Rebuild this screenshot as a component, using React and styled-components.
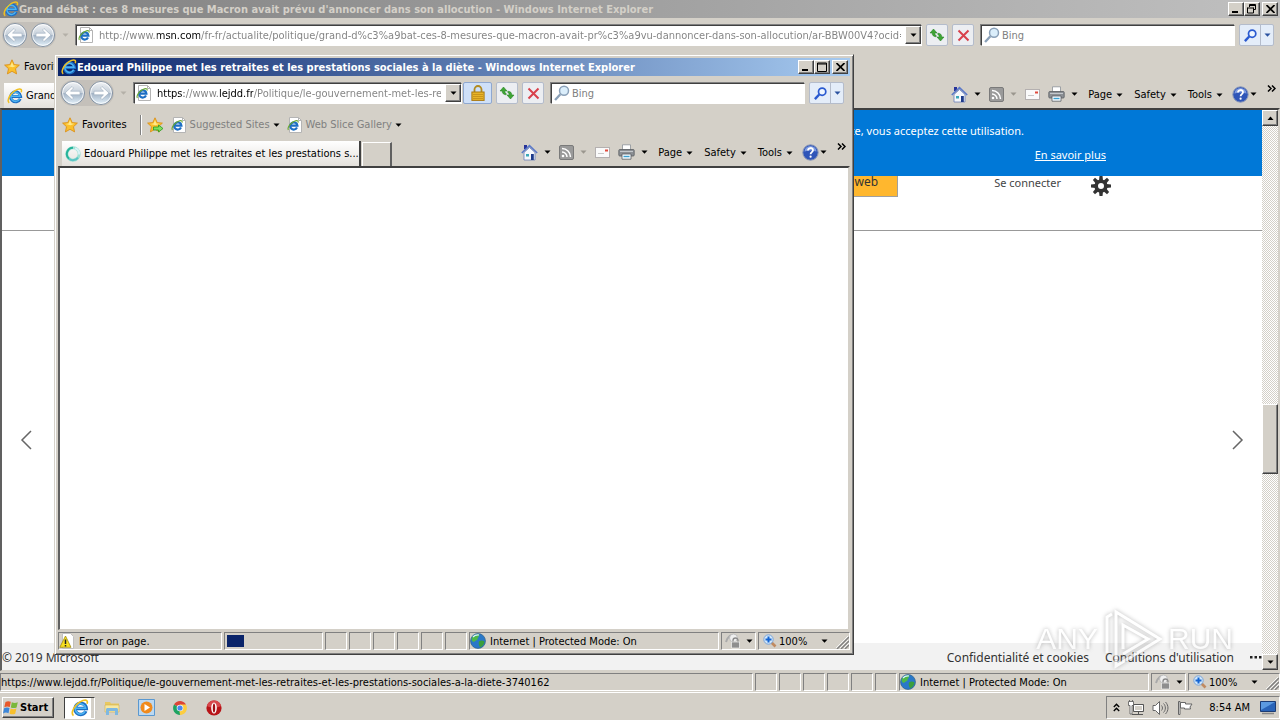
import React from 'react';
import styled, { createGlobalStyle, css } from 'styled-components';

const mainWindow = {
  title:
    "Grand débat : ces 8 mesures que Macron avait prévu d'annoncer dans son allocution - Windows Internet Explorer",
  url: 'http://www.msn.com/fr-fr/actualite/politique/grand-d%c3%a9bat-ces-8-mesures-que-macron-avait-pr%c3%a9vu-dannoncer-dans-son-allocution/ar-BBW00V4?ocid=ientp',
  urlStops: '#808080 58px, #000 58px 101px, #808080 101px',
  tab: 'Grand débat : ces 8 mesures que Macron avait…',
};

const popupWindow = {
  title:
    'Edouard Philippe met les retraites et les prestations sociales à la diète - Windows Internet Explorer',
  url: 'https://www.lejdd.fr/Politique/le-gouvernement-met-les-retraites-et-les-prestations-sociales-a-la-diete-3740162',
  urlStops: '#000 27px, #808080 27px 62px, #000 62px 96px, #808080 96px',
  tab: 'Edouard Philippe met les retraites et les prestations s...',
};

const IeLogo = ({ size = 16 }) => (
  <svg width={size} height={size} viewBox="0 0 16 16" fill="none">
    <path
      d="M13.2 10.8A5 5 0 1 1 13.6 8.4H4.4"
      stroke="#1d6fc4"
      strokeWidth="3"
    />
    <path
      d="M12.6 10.8A4.6 4.6 0 1 1 13 8.2H4.4"
      stroke="#4db4f2"
      strokeWidth="1.4"
    />
    <path
      d="M2.2 14.8C-.6 12.6 3 4.4 10.6 1.4c3.2-1.2 4.6.2 3.6 2.8"
      stroke="#f0c020"
      strokeWidth="1.5"
    />
  </svg>
);

const IePage = () => (
  <svg width="16" height="16" viewBox="0 0 16 16" fill="none">
    <path d="M2.5.5h9l3 3v12h-12z" fill="#fff" stroke="#b4b4b4" />
    <path d="M11.5.5v3h3" stroke="#b4b4b4" />
    <path
      d="M10 10.6A3.6 3.6 0 1 1 10.4 8.6H3.6"
      stroke="#1d6fc4"
      strokeWidth="2.2"
    />
    <path
      d="M1.4 13C0 11 3 5.6 8.6 3.8c2-.6 2.8.2 2.4 1.8"
      stroke="#6aa830"
      strokeWidth="1.1"
    />
  </svg>
);

const NavArrow = ({ flip }) => (
  <svg width="26" height="26" viewBox="0 0 26 26" fill="none">
    <defs>
      <linearGradient id="orb" x1="0" y1="0" x2="0" y2="1">
        <stop offset="0" stopColor="#f0f2f5" />
        <stop offset=".48" stopColor="#c6d0da" />
        <stop offset=".52" stopColor="#a4b4c6" />
        <stop offset="1" stopColor="#e4f2fb" />
      </linearGradient>
    </defs>
    <circle cx="13" cy="13" r="11.5" fill="url(#orb)" stroke="#8492a2" />
    <circle cx="13" cy="13" r="10.4" stroke="#fff" strokeOpacity=".8" />
    <path
      transform={flip ? 'translate(26 0) scale(-1 1)' : undefined}
      d="M5 13l7-6.500 1.500 1.500-3 3.200H20v3.600h-9.500l3 3.200-1.500 1.500z"
      fill="#fff"
      stroke="#9aabbc"
      strokeWidth=".6"
    />
  </svg>
);

const Star = ({ add }) => (
  <svg width="17" height="16" viewBox="0 0 17 16">
    <path
      d="M8 .8l2.2 4.8 5.2.5-3.9 3.6 1.1 5.2L8 12.3l-4.6 2.6 1.1-5.2L.6 6.1l5.2-.5z"
      fill="#fbc02c"
      stroke="#d98a10"
      strokeWidth=".8"
    />
    <path d="M8 3l1.4 3.5 3.2.3-4 1.4-5-1.3 3-.4z" fill="#ffe98a" />
    {add && (
      <path
        d="M6.5 10h5V8l4.500 3.500-4.500 3.500v-2h-5z"
        fill="#7fe060"
        stroke="#2a9a20"
        strokeWidth=".8"
      />
    )}
  </svg>
);

const Magnifier = ({ color = '#8aa0b8', glass = '#dbeefb', size = 16, weight = 1.4 }) => (
  <svg width={size} height={size} viewBox="0 0 15 15" fill="none">
    <path d="M1 14l5-5.400" stroke={color} strokeWidth={weight + 0.8} />
    <circle cx="9.400" cy="5.400" r="4.200" fill={glass} stroke={color} strokeWidth={weight} />
  </svg>
);

const Padlock = () => (
  <svg width="14" height="16" viewBox="0 0 14 16" fill="none">
    <path d="M3.5 8V4.5a3.5 3.5 0 0 1 7 0V8" stroke="#b08a20" strokeWidth="1.8" />
    <rect x=".9" y="7" width="12.2" height="8.4" fill="#e8b428" stroke="#a87812" />
    <path d="M2 9.5h10M2 11.5h10M2 13.5h10" stroke="#c08c18" strokeWidth=".8" />
  </svg>
);

const Refresh = () => (
  <svg width="16" height="14" viewBox="0 0 16 14" fill="#3fa535" stroke="#1d7a1a" strokeWidth=".5">
    <path d="M4.500 1L8 5H5.800c0 1.500.4 2 1.400 2.500v1.300C4.600 8.700 3.200 7.500 3.200 5H1z" />
    <path d="M11.500 13L8 9h2.200c0-1.500-.4-2-1.400-2.500V5.200c2.600.1 4 1.300 4 3.800H15z" />
  </svg>
);

const Cross = () => (
  <svg width="13" height="13" viewBox="0 0 13 13" fill="none">
    <path d="M1.500 1.500l10 10M11.500 1.500l-10 10" stroke="#d8414c" strokeWidth="2" />
  </svg>
);

const Home = () => (
  <svg width="17" height="17" viewBox="0 0 17 17" fill="none">
    <path d="M3 1h3v4H3z" fill="#27339a" />
    <path d="M3 8.500L8.500 3.500 14 8.500V16H3z" fill="#f6f8fc" stroke="#6a7fb8" strokeWidth=".8" />
    <path d="M.8 9l7.700-7.400L16.200 9" stroke="#5a78c8" strokeWidth="1.600" />
    <path d="M5 10h3v2.500H5z" fill="#3ba8b8" />
    <path d="M10 10h2.800v6H10z" fill="#1d3a8a" />
  </svg>
);

const Feed = () => (
  <svg width="15" height="15" viewBox="0 0 15 15" fill="none">
    <rect x=".5" y=".5" width="14" height="14" rx="1.500" fill="#9a9a9a" stroke="#7a7a7a" />
    <circle cx="4" cy="11" r="1.300" fill="#fff" />
    <path d="M3 7a5 5 0 0 1 5 5M3 3.500A8.500 8.500 0 0 1 11.500 12" stroke="#fff" strokeWidth="1.500" />
  </svg>
);

const Mail = () => (
  <svg width="15" height="11" viewBox="0 0 15 11" fill="none">
    <rect x=".5" y=".5" width="14" height="10" fill="#fafafa" stroke="#b4b0b0" />
    <path d="M10 2.500h3v2h-3z" fill="#e04a3c" />
    <path d="M3 6.500h6" stroke="#c8c8c8" />
  </svg>
);

const Printer = () => (
  <svg width="17" height="16" viewBox="0 0 17 16" fill="none">
    <path d="M4.500.8h8V6h-8z" fill="#fff" stroke="#8c9298" strokeWidth=".8" />
    <rect x=".8" y="5.500" width="15.400" height="6.500" rx="1" fill="#8b8f94" stroke="#5a5e62" strokeWidth=".8" />
    <path d="M2 7.500h13" stroke="#c4c8cc" />
    <path d="M4 10h9v5.200H4z" fill="#f4fbff" stroke="#5a5e62" strokeWidth=".8" />
    <path d="M5.500 12.500h6" stroke="#3aa0d0" strokeWidth="1.400" />
  </svg>
);

const Help = () => (
  <svg width="17" height="17" viewBox="0 0 17 17" fill="none">
    <circle cx="8.500" cy="8.500" r="7.700" fill="#2f55b8" stroke="#8a98b8" />
    <path d="M2.500 7.500a6 5.500 0 0 1 12 0c-3-1.500-9-1.500-12 0z" fill="#7f9ce0" />
    <path d="M6 6.500c0-3.300 5-3.200 5-.3 0 1.900-2.400 1.900-2.400 4" stroke="#fff" strokeWidth="1.800" />
    <circle cx="8.600" cy="12.700" r="1.100" fill="#fff" />
  </svg>
);

const Spinner = () => (
  <svg width="16" height="16" viewBox="0 0 16 16" fill="none">
    <circle cx="8" cy="8" r="6.200" stroke="#9fe0d4" strokeWidth="3" />
    <path d="M8 1.800A6.200 6.200 0 0 0 4 12.700" stroke="#27b39a" strokeWidth="2" />
    <path d="M4 12.700A6.200 6.200 0 0 0 13 11.600" stroke="#5cc4c4" strokeWidth="2" />
    <path d="M10 2.300A6.200 6.200 0 0 1 14.200 8.500" stroke="#d8f2f6" strokeWidth="2" />
  </svg>
);

const Globe = () => (
  <svg width="16" height="16" viewBox="0 0 16 16">
    <circle cx="8" cy="8" r="7.500" fill="#2a78c8" stroke="#2c5a80" strokeWidth=".6" />
    <path d="M2 4.500C4 1.500 8 .8 9.500 1.500 9 4 7.500 4.500 7.500 6.500 6 8 5 7.500 4 9 2.500 8.500 1 7.500 2 4.500z" fill="#4fb848" />
    <path d="M9 8.500c2-1.500 4-1 5.500 0-.2 3-2 5-4.500 6-.5-2-2-3.500-1-6z" fill="#3a9e3c" />
    <path d="M3 4a6 4 0 0 1 6-2" stroke="#d8f4ff" strokeWidth="1.200" fill="none" />
  </svg>
);

const Warning = () => (
  <svg width="16" height="16" viewBox="0 0 16 16" fill="none">
    <path d="M3.500.5h8l3 3v12h-11z" fill="#fff" stroke="#c0c0c0" />
    <path d="M6.500 3L12 14.300H.8z" fill="#f8e020" stroke="#a08a10" strokeWidth=".8" />
    <path d="M6.500 6.500V11M6.500 12v1.400" stroke="#222" strokeWidth="1.500" />
  </svg>
);

const PrivacyLock = () => (
  <svg width="16" height="16" viewBox="0 0 16 16" fill="none">
    <path d="M1 9c2-6 5-8 8-6" stroke="#aaa" strokeWidth="2" />
    <circle cx="8.500" cy="5" r="4" fill="#efefef" stroke="#b4b4b4" strokeWidth=".8" />
    <path d="M8 9V7.500a2.500 2.500 0 0 1 5 0V9" stroke="#8a8a8a" strokeWidth="1.300" />
    <path d="M6.500 9h8v6h-8z" fill="#8e8e8e" stroke="#fff" strokeWidth=".6" />
  </svg>
);

const ZoomIn = () => (
  <svg width="14" height="14" viewBox="0 0 14 14" fill="none">
    <path d="M8.500 8.500l4 4" stroke="#c08a60" strokeWidth="2.600" />
    <circle cx="5.500" cy="5.500" r="4.700" fill="#cfe6fa" stroke="#7ca4d8" />
    <path d="M5.500 2.500v6M2.500 5.500h6" stroke="#1464d2" strokeWidth="2" />
  </svg>
);

const Grip = () => (
  <svg width="13" height="13" viewBox="0 0 13 13" fill="none">
    <path d="M1 13L13 1M5 13l8-8M9 13l4-4" stroke="#808080" strokeWidth="1.400" />
    <path d="M0 12L12 0M4 12l8-8M8 12l5-5" stroke="#fff" strokeWidth=".8" />
  </svg>
);

const Caret = ({ color = '#000', up }) => (
  <svg width="7" height="4" viewBox="0 0 7 4" fill={color}>
    <path d={up ? 'M.5 4h6L3.500.5z' : 'M.5.500h6L3.500 3.700z'} />
  </svg>
);

const Gear = () => (
  <svg width="20" height="20" viewBox="-10 -10 20 20">
    {[0, 45, 90, 135, 180, 225, 270, 315].map((a) => (
      <path key={a} transform={`rotate(${a})`} d="M-1.500-10h3l.5 4.500h-4z" fill="#333" />
    ))}
    <circle r="4.800" fill="none" stroke="#333" strokeWidth="3.600" />
  </svg>
);

const Chevron = ({ right }) => (
  <svg width="12" height="20" viewBox="0 0 12 20" fill="none">
    <path d={right ? 'M1 1l9 9-9 9' : 'M11 1l-9 9 9 9'} stroke="#666" strokeWidth="1.500" />
  </svg>
);

const WindowsFlag = () => (
  <svg width="16" height="15" viewBox="0 0 16 15">
    <path d="M2.500 2C4.500.8 6 1 7.800 1.800L6.800 7C5 6.200 3.300 6.200 1.300 7.200z" fill="#e8582a" />
    <path d="M8.800 2.200c2 .9 3.800.9 6 0L13.600 7.400c-2 .9-3.800.8-5.800 0z" fill="#7ab83c" />
    <path d="M1.100 8.200c2-1 3.600-1 5.400-.2l-1 5.200C3.700 12.400 2 12.400 0 13.400z" fill="#3c86d8" />
    <path d="M7.600 8.500c2 .8 3.600.9 5.800 0l-1.200 5.200c-2 .9-3.700.8-5.600 0z" fill="#f8c02c" />
  </svg>
);

const Folder = () => (
  <svg width="16" height="16" viewBox="0 0 16 16">
    <path d="M1 2h5l1 1.500h8V8H1z" fill="#e8c860" />
    <path d="M1 5h14v7H1z" fill="#f8e8a0" stroke="#d0b050" strokeWidth=".6" />
    <path d="M2 15V9.500C2 8 3 8 4 8h8c1 0 2 0 2 1.500V15h-3v-4H5v4z" fill="#7fb8e0" />
  </svg>
);

const MediaPlayer = () => (
  <svg width="17" height="17" viewBox="0 0 17 17">
    <path d="M.5.5h16v16H.5z" fill="#bcd8f0" stroke="#5a98d0" />
    <circle cx="8.500" cy="8.500" r="6" fill="#f08a1c" />
    <path d="M6.500 5l5.500 3.500L6.500 12z" fill="#fff" />
  </svg>
);

const Chrome = () => (
  <svg width="14" height="14" viewBox="0 0 14 14">
    <path d="M7 7L1 3.500A7 7 0 0 1 13 3.500z" fill="#dc4437" />
    <path d="M7 7L1 3.500A7 7 0 0 0 7 14l3-5z" fill="#1da362" />
    <path d="M7 7h-1l1 7a7 7 0 0 0 6-10.500H7z" fill="#fccd40" />
    <circle cx="7" cy="7" r="3.300" fill="#f4f4f4" />
    <circle cx="7" cy="7" r="2.600" fill="#4a88ee" />
  </svg>
);

const Opera = () => (
  <svg width="16" height="16" viewBox="0 0 16 16">
    <circle cx="8" cy="8" r="7.600" fill="#b81418" />
    <path d="M1 6a7.200 7.200 0 0 1 14 0c-4 2-10 2-14 0z" fill="#d8484c" />
    <ellipse cx="8" cy="8" rx="2.800" ry="5.500" fill="#fff" />
    <ellipse cx="8" cy="8" rx="1.200" ry="4.600" fill="#a01014" />
  </svg>
);

const Network = () => (
  <svg width="16" height="16" viewBox="0 0 16 16" fill="none">
    <path d="M5.500 4.500h10v7h-10z" fill="#d4d0c8" stroke="#555" />
    <path d="M6.500 5.500h8v5h-8z" stroke="#fff" />
    <path d="M4 14.500h11M10.500 12v2" stroke="#555" />
    <path d="M.5 1.500h5v4H4V14H2V5.500H.5zM1.500 0v1.500M4.500 0v1.500" fill="#fff" stroke="#555" strokeWidth=".8" />
  </svg>
);

const Speaker = () => (
  <svg width="17" height="16" viewBox="0 0 17 16" fill="none" stroke="#666">
    <path d="M1 5.500h2.500L7.500 1.500v13L3.500 10.500H1z" fill="#fff" />
    <path d="M9.500 5.500c1.300 1.500 1.300 3.500 0 5M11.500 3.500c2.500 2.500 2.500 6.500 0 9M13.500 2c3.300 3.500 3.300 8.500 0 12" />
  </svg>
);

const ActionFlag = () => (
  <svg width="16" height="16" viewBox="0 0 16 16" fill="#fff" stroke="#666">
    <path d="M1.500 1.500h1.500v13H1.500zM3.500 2.500h5v1.500h6.500l-2 3 .5 2H7.500V8h-4z" />
  </svg>
);

const Desktop = () => (
  <svg width="16" height="14" viewBox="0 0 16 14">
    <path d="M.5.500h15v10H.5z" fill="#2a64b8" stroke="#1c3c74" />
    <path d="M1 1h14L1 9z" fill="#5c9ae0" />
    <path d="M2 12.500h12" stroke="#888" strokeWidth="1.500" />
  </svg>
);

const IEWindow = ({ data, active, secure, loading, children, status }) => (
  <>
    <TitleBar $active={active}>
      <IeLogo />
      <Title>{data.title}</Title>
      <CaptionButton aria-label="Minimize">
        <svg width="8" height="8" viewBox="0 0 8 8">
          <path d="M0 6h6v2H0z" />
        </svg>
      </CaptionButton>
      <CaptionButton aria-label="Maximize">
        <svg width="10" height="10" viewBox="0 0 10 10" fill="none" stroke="#000">
          {active ? (
            <path d="M.5 1h9M.5 2h9M.5 1v8.500h9V1" />
          ) : (
            <path d="M2.500 3V.5h6v5H7M2.500 1.500h6M.5 4h6M.5 3.500v5.500h6V3.500" />
          )}
        </svg>
      </CaptionButton>
      <CaptionButton aria-label="Close" $last>
        <svg width="9" height="8" viewBox="0 0 9 8" stroke="#000" strokeWidth="1.700">
          <path d="M.5 0l8 8M8.500 0l-8 8" />
        </svg>
      </CaptionButton>
    </TitleBar>

    <NavRow>
      <NavPair>
        <NavButton aria-label="Back">
          <NavArrow />
        </NavButton>
        <NavButton aria-label="Forward">
          <NavArrow flip />
        </NavButton>
      </NavPair>
      <Caret color="#b4b0a8" />
      <AddressBox>
        <IePage />
        <AddressInput aria-label="Address" defaultValue={data.url} $stops={data.urlStops} />
        <DropButton aria-label="Show history">
          <Caret />
        </DropButton>
      </AddressBox>
      {secure && (
        <LockButton aria-label="Security report">
          <Padlock />
        </LockButton>
      )}
      <ToolButton aria-label="Refresh">
        <Refresh />
      </ToolButton>
      <ToolButton aria-label="Stop">
        <Cross />
      </ToolButton>
      <SearchBox>
        <Magnifier />
        <SearchInput aria-label="Search" placeholder="Bing" />
      </SearchBox>
      <SearchGo>
        <GoButton aria-label="Go">
          <Magnifier color="#2a5ad0" glass="#eef6ff" size={13} weight={2} />
        </GoButton>
        <GoMenu aria-label="Search options">
          <Caret color="#2a52a0" />
        </GoMenu>
      </SearchGo>
    </NavRow>

    <FavoritesBar>
      <FavoriteButton $strong>
        <Star />
        Favorites
      </FavoriteButton>
      <Separator />
      <FavoriteButton aria-label="Add to Favorites Bar">
        <Star add />
      </FavoriteButton>
      <FavoriteButton>
        <IePage />
        Suggested Sites
        <Caret />
      </FavoriteButton>
      <FavoriteButton>
        <IePage />
        Web Slice Gallery
        <Caret />
      </FavoriteButton>
    </FavoritesBar>

    <TabRow>
      <Tab>
        {loading ? <Spinner /> : <IeLogo />}
        <span>{data.tab}</span>
      </Tab>
      <NewTab aria-label="New tab" />
      <CommandBar>
        <Command aria-label="Home">
          <Home />
          <Caret />
        </Command>
        <Command aria-label="Feeds">
          <Feed />
          <Caret color="#9a968e" />
        </Command>
        <Command aria-label="Read mail">
          <Mail />
        </Command>
        <Command aria-label="Print">
          <Printer />
          <Caret />
        </Command>
        <MenuCommand>
          Page
          <Caret />
        </MenuCommand>
        <MenuCommand>
          Safety
          <Caret />
        </MenuCommand>
        <MenuCommand>
          Tools
          <Caret />
        </MenuCommand>
        <HelpCommand aria-label="Help">
          <Help />
          <Caret />
        </HelpCommand>
      </CommandBar>
      <More aria-label="More commands">
        <svg width="9" height="7" viewBox="0 0 9 7" fill="none" stroke="#000" strokeWidth="1.500">
          <path d="M1 .5l3 3-3 3M5 .5l3 3-3 3" />
        </svg>
      </More>
    </TabRow>

    <Viewport>{children}</Viewport>

    <StatusBar>
      {status}
      {[1, 2, 3, 4, 5, 6].map((n) => (
        <SmallPanel key={n} />
      ))}
      <ZonePanel>
        <Globe />
        <span>Internet | Protected Mode: On</span>
      </ZonePanel>
      <PrivacyPanel aria-label="Privacy report">
        <PrivacyLock />
        <Caret />
      </PrivacyPanel>
      <ZoomPanel>
        <ZoomIn />
        <span>100%</span>
        <Caret />
        <Grip />
      </ZoomPanel>
    </StatusBar>
  </>
);

const MsnPage = () => (
  <Page>
    <CookieBanner>
      <p>En continuant à naviguer sur ce site, vous acceptez cette utilisation.</p>
      <CookieLink href="#cookies">En savoir plus</CookieLink>
    </CookieBanner>
    <PageHeader>
      <WebSearch>recherche web</WebSearch>
      <SignIn href="#signin">Se connecter</SignIn>
      <IconButton aria-label="Options">
        <Gear />
      </IconButton>
    </PageHeader>
    <Slides>
      <IconButton aria-label="Précédent">
        <Chevron />
      </IconButton>
      <IconButton aria-label="Suivant">
        <Chevron right />
      </IconButton>
    </Slides>
    <PageFooter>
      <span>© 2019 Microsoft</span>
      <FooterLink href="#privacy">Confidentialité et cookies</FooterLink>
      <FooterLink href="#terms">Conditions d'utilisation</FooterLink>
      <MoreDots aria-label="Plus">
        <svg width="12" height="3" viewBox="0 0 12 3" fill="#222">
          <path d="M0 0h2.500v2.500H0zM4.500 0H7v2.500H4.500zM9 0h2.500v2.500H9z" />
        </svg>
      </MoreDots>
    </PageFooter>
  </Page>
);

const App = () => (
  <>
    <GlobalStyle />
    <Screen>
      <MaximizedWindow>
        <IEWindow
          data={mainWindow}
          status={
            <TextPanel>
              <span>{popupWindow.url}</span>
            </TextPanel>
          }
        >
          <MsnPage />
          <ScrollBar>
            <ScrollButton aria-label="Scroll up">
              <Caret up />
            </ScrollButton>
            <ScrollTrack>
              <ScrollThumb />
            </ScrollTrack>
            <ScrollButton aria-label="Scroll down">
              <Caret />
            </ScrollButton>
          </ScrollBar>
        </IEWindow>
      </MaximizedWindow>

      <TaskBar>
        <StartButton>
          <WindowsFlag />
          Start
        </StartButton>
        <QuickButton aria-label="Internet Explorer" $active>
          <IeLogo size={18} />
        </QuickButton>
        <QuickButton aria-label="Windows Explorer">
          <Folder />
        </QuickButton>
        <QuickButton aria-label="Media Player">
          <MediaPlayer />
        </QuickButton>
        <QuickButton aria-label="Chrome">
          <Chrome />
        </QuickButton>
        <QuickButton aria-label="Opera">
          <Opera />
        </QuickButton>
        <Tray>
          <svg width="7" height="9" viewBox="0 0 7 9" fill="none" stroke="#000" strokeWidth="1.400">
            <path d="M.8 4l2.700-2.700L6.200 4M.8 8l2.700-2.700L6.200 8" />
          </svg>
          <Network />
          <Speaker />
          <ActionFlag />
          <Clock>8:54 AM</Clock>
          <Desktop />
        </Tray>
      </TaskBar>

      <PopupWindow>
        <IEWindow
          data={popupWindow}
          active
          secure
          loading
          status={
            <>
              <ErrorPanel>
                <Warning />
                <span>Error on page.</span>
              </ErrorPanel>
              <ProgressPanel>
                <ProgressBlock />
              </ProgressPanel>
            </>
          }
        />
      </PopupWindow>

      <Watermark>
        ANY
        <svg width="60" height="60" viewBox="0 0 60 60" fill="none" stroke="#fff" strokeWidth="3">
          <path d="M4 44V8l5-3M13 50V3l44 27-44 27v-6M20 40V16l25 14-25 15" />
        </svg>
        RUN
      </Watermark>
    </Screen>
  </>
);

export default App;

const GlobalStyle = createGlobalStyle`
  * {
    box-sizing: border-box;
  }
  body {
    margin: 0;
    overflow: hidden;
    background: #d4d0c8;
    color: #000;
    font: 11px/14px 'DejaVu Sans Condensed', 'DejaVu Sans', sans-serif;
  }
  p {
    margin: 0;
  }
  button, input {
    margin: 0;
    padding: 0;
    border: 0;
    border-radius: 0;
    background: none;
    color: inherit;
    font: inherit;
  }
  svg {
    display: block;
    flex: none;
  }
`;

const raised = css`
  border: 1px solid;
  border-color: #fff #404040 #404040 #fff;
  box-shadow: inset -1px -1px 0 #808080;
  background: #d4d0c8;
`;

const sunken = css`
  border: 1px solid;
  border-color: #808080 #fff #fff #808080;
`;

const Screen = styled.div`
  position: relative;
  display: flex;
  flex-direction: column;
  height: 100vh;
`;

const MaximizedWindow = styled.main`
  flex: 1;
  display: flex;
  flex-direction: column;
  min-height: 0;
`;

const PopupWindow = styled.section`
  position: absolute;
  left: 54px;
  top: 54px;
  width: 800px;
  height: 601px;
  display: flex;
  flex-direction: column;
  padding: 3px;
  background: #d4d0c8;
  border: 1px solid;
  border-color: #d4d0c8 #404040 #404040 #d4d0c8;
  box-shadow: inset 1px 1px 0 #fff, inset -1px -1px 0 #808080;
`;

const TitleBar = styled.header`
  display: flex;
  align-items: center;
  flex: none;
  height: 18px;
  padding: 0 2px 0 3px;
  color: ${({ $active }) => ($active ? '#fff' : '#d4d0c8')};
  background: ${({ $active }) =>
    $active
      ? 'linear-gradient(90deg, #0a246a, #a6caf0)'
      : 'linear-gradient(90deg, #808080, #c0c0c0)'};
`;

const Title = styled.span`
  flex: 1;
  min-width: 0;
  padding-top: 2px;
  overflow: hidden;
  white-space: nowrap;
  font-weight: bold;
`;

const CaptionButton = styled.button`
  ${raised}
  display: flex;
  align-items: center;
  justify-content: center;
  width: 16px;
  height: 14px;
  margin-left: ${({ $last }) => ($last ? '2px' : '0')};
`;

const NavRow = styled.div`
  display: flex;
  align-items: center;
  flex: none;
  gap: 4px;
  height: 34px;
  padding: 0 6px 0 2px;
`;

const NavPair = styled.div`
  display: flex;
  gap: 2px;
  margin-right: 2px;
  border-radius: 14px;
  background: #c4c0ba;
`;

const NavButton = styled.button`
  display: flex;
`;

const AddressBox = styled.div`
  display: flex;
  align-items: center;
  flex: 1;
  min-width: 0;
  height: 21px;
  margin-left: 3px;
  padding-left: 1px;
  background: #fff;
  border: 1px solid;
  border-color: #404040 #fff #fff #404040;
  box-shadow: -1px -1px 0 #808080;
`;

const AddressInput = styled.input`
  flex: 1;
  min-width: 0;
  margin: 0 4px 0 5px;
  padding-top: 2px;
  color: transparent;
  caret-color: #000;
  background: ${({ $stops }) => `linear-gradient(90deg, ${$stops})`};
  background-clip: text;
  -webkit-background-clip: text;
  outline: none;
`;

const DropButton = styled.button`
  ${raised}
  display: flex;
  align-items: center;
  justify-content: center;
  width: 16px;
  height: 18px;
`;

const ToolButton = styled.button`
  display: flex;
  align-items: center;
  justify-content: center;
  width: 22px;
  height: 22px;
  background: #eceef2;
  border: 1px solid #b4bccb;
  border-radius: 2px;
`;

const LockButton = styled(ToolButton)`
  width: 29px;
  margin-left: -3px;
  background: #cfe0f8;
  border-color: #8fa8d0;
`;

const SearchBox = styled.label`
  display: flex;
  align-items: center;
  gap: 2px;
  flex: none;
  width: 254px;
  height: 21px;
  margin-left: 3px;
  padding: 0 2px;
  background: #fff;
  border: 1px solid;
  border-color: #404040 #fff #fff #404040;
  box-shadow: -1px -1px 0 #808080;
`;

const SearchInput = styled.input`
  flex: 1;
  min-width: 0;
  padding-top: 2px;
  outline: none;
  &::placeholder {
    color: #808080;
    opacity: 1;
  }
`;

const SearchGo = styled.div`
  display: flex;
  height: 22px;
  background: #e4edf9;
  border: 1px solid #b4bccb;
  border-radius: 2px;
`;

const GoButton = styled.button`
  display: flex;
  align-items: center;
  justify-content: center;
  width: 20px;
`;

const GoMenu = styled(GoButton)`
  width: 13px;
  border-left: 1px solid #b4bccb;
`;

const FavoritesBar = styled.div`
  display: flex;
  align-items: center;
  flex: none;
  gap: 7px;
  height: 28px;
  padding: 2px 0 0 4px;
`;

const FavoriteButton = styled.button`
  display: flex;
  align-items: center;
  gap: 3px;
  white-space: nowrap;
  color: ${({ $strong }) => ($strong ? '#000' : '#808080')};
`;

const Separator = styled.span`
  width: 2px;
  height: 20px;
  margin-left: 6px;
  margin-right: -2px;
  border-left: 1px solid #808080;
  border-right: 1px solid #fff;
`;

const TabRow = styled.div`
  display: flex;
  align-items: flex-end;
  flex: none;
  height: 28px;
  padding-left: 4px;
`;

const Tab = styled.div`
  display: flex;
  align-items: center;
  gap: 3px;
  flex: none;
  width: 299px;
  height: 25px;
  padding: 1px 0 0 3px;
  overflow: hidden;
  white-space: nowrap;
  background: linear-gradient(#fff, #e4e1dc);
  border-right: 2px solid #404040;
`;

const NewTab = styled.button`
  width: 30px;
  height: 24px;
  margin-left: 1px;
  border-top: 1px solid #fff;
  border-left: 1px solid #fff;
  border-right: 2px solid #606060;
`;

const CommandBar = styled.div`
  display: flex;
  align-items: center;
  align-self: stretch;
  gap: 8px;
  margin-left: auto;
`;

const Command = styled.button`
  display: flex;
  align-items: center;
  gap: 6px;
`;

const MenuCommand = styled(Command)`
  gap: 4px;
  padding: 2px 1px 0 2px;
`;

const HelpCommand = styled(Command)`
  gap: 1px;
`;

const More = styled.button`
  align-self: flex-start;
  padding: 5px 4px 0 10px;
`;

const Viewport = styled.div`
  display: flex;
  flex: 1;
  min-height: 0;
  background: #fff;
  border: solid;
  border-width: 2px 2px 1px;
  border-color: #404040 #d4d0c8 #d4d0c8 #606060;
`;

const Page = styled.div`
  display: flex;
  flex-direction: column;
  flex: 1;
  min-width: 0;
  color: #444;
  font: 11px/16px 'Noto Sans', 'Open Sans', sans-serif;
`;

const CookieBanner = styled.div`
  display: flex;
  flex-direction: column;
  align-items: flex-end;
  flex: none;
  gap: 8px;
  height: 66px;
  padding: 13px 156px 0 0;
  color: #fff;
  background: #0078d7;
  p {
    margin-right: 82px;
  }
`;

const CookieLink = styled.a`
  color: #fff;
`;

const PageHeader = styled.div`
  display: flex;
  align-items: flex-start;
  justify-content: flex-end;
  flex: none;
  height: 55px;
  padding-right: 151px;
  border-bottom: 1px solid #999;
`;

const WebSearch = styled.button`
  height: 21px;
  padding: 0 19px 8px;
  color: #333;
  font-size: 12px;
  line-height: 12px;
  background: #ffb72e;
  border: solid #a0a0a0;
  border-width: 0 1px 1px 0;
`;

const SignIn = styled.a`
  margin: 0 30px 0 96px;
  color: #444;
  line-height: 13px;
  text-decoration: none;
`;

const IconButton = styled.button`
  display: flex;
`;

const Slides = styled.div`
  display: flex;
  align-items: center;
  justify-content: space-between;
  flex: 1;
  padding: 6px 18px 0;
`;

const PageFooter = styled.footer`
  display: flex;
  align-items: center;
  flex: none;
  height: 27px;
  padding-top: 2px;
  font-size: 12px;
  color: #333;
  background: #f2f2f2;
`;

const FooterLink = styled.a`
  margin-right: 16px;
  color: #333;
  text-decoration: none;
  span + & {
    margin-left: auto;
  }
`;

const MoreDots = styled.button`
  width: 12px;
`;

const ScrollBar = styled.div`
  display: flex;
  flex-direction: column;
  flex: none;
  width: 16px;
`;

const ScrollButton = styled.button`
  ${raised}
  display: flex;
  align-items: center;
  justify-content: center;
  height: 16px;
`;

const ScrollTrack = styled.div`
  display: flex;
  flex-direction: column;
  flex: 1;
  background: repeating-conic-gradient(#fff 0 25%, #d4d0c8 0 50%) 0 0 / 2px 2px;
  &::before {
    content: '';
    flex: 279;
  }
  &::after {
    content: '';
    flex: 180;
  }
`;

const ScrollThumb = styled.div`
  ${raised}
  height: 70px;
`;

const StatusBar = styled.footer`
  display: flex;
  flex: none;
  gap: 2px;
  height: 21px;
  padding: 2px 0 1px;
  white-space: nowrap;
  span {
    padding-top: 2px;
  }
`;

const StatusPanel = styled.div`
  ${sunken}
  display: flex;
  align-items: center;
  flex: none;
  gap: 4px;
  overflow: hidden;
`;

const TextPanel = styled(StatusPanel)`
  flex: 1;
`;

const ErrorPanel = styled(StatusPanel)`
  flex: 1;
`;

const ProgressPanel = styled(StatusPanel)`
  width: 99px;
  padding-left: 2px;
`;

const ProgressBlock = styled.div`
  width: 17px;
  height: 12px;
  background: #0a246a;
`;

const SmallPanel = styled(StatusPanel)`
  width: 22px;
`;

const ZonePanel = styled(StatusPanel)`
  width: 250px;
`;

const PrivacyPanel = styled.button`
  ${sunken}
  display: flex;
  align-items: center;
  flex: none;
  gap: 5px;
  width: 35px;
  padding-left: 3px;
`;

const ZoomPanel = styled.button`
  ${sunken}
  display: flex;
  align-items: center;
  flex: none;
  gap: 2px;
  width: 92px;
  padding-left: 4px;
  text-align: left;
  span {
    width: 40px;
  }
  svg:last-child {
    margin-left: auto;
    align-self: flex-end;
  }
`;

const TaskBar = styled.nav`
  display: flex;
  align-items: center;
  flex: none;
  height: 28px;
  padding: 2px 0 0 2px;
  border-top: 1px solid #fff;
`;

const StartButton = styled.button`
  ${raised}
  display: flex;
  align-items: center;
  gap: 1px;
  width: 52px;
  height: 21px;
  margin-right: 10px;
  font-weight: bold;
`;

const QuickButton = styled.button`
  display: flex;
  align-items: center;
  justify-content: center;
  width: 34px;
  height: 22px;
  ${({ $active }) =>
    $active &&
    css`
      width: 31px;
      background: #fff;
      border: 1px solid;
      border-color: #404040 #fff #fff #404040;
      box-shadow: inset -3px 0 0 #d4d0c8;
    `}
`;

const Tray = styled.div`
  ${sunken}
  display: flex;
  align-items: center;
  gap: 8px;
  height: 23px;
  margin-left: auto;
  padding: 0 3px 0 6px;
`;

const Clock = styled.time`
  margin: 0 2px 0 8px;
  white-space: nowrap;
`;

const Watermark = styled.div`
  position: absolute;
  right: 47px;
  bottom: 51px;
  display: flex;
  align-items: center;
  gap: 5px;
  color: #fff;
  opacity: 0.7;
  pointer-events: none;
  font: 30px/60px 'Liberation Sans Narrow', 'Liberation Sans', sans-serif;
  filter: drop-shadow(0 0 2px #999);
`;
